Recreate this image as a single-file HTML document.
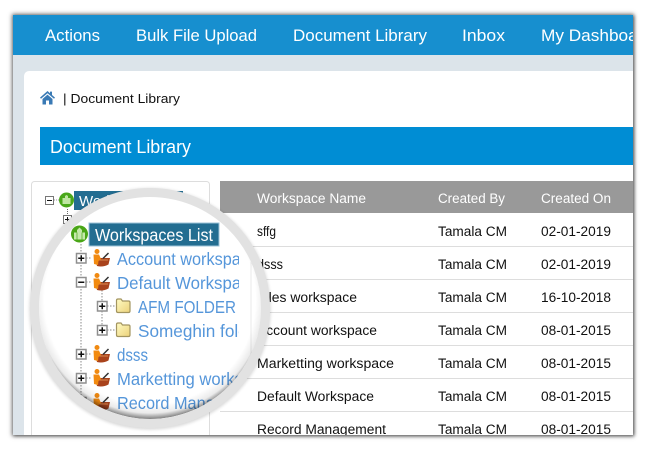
<!DOCTYPE html>
<html><head><meta charset="utf-8"><style>
html,body{margin:0;padding:0;background:#fff;width:650px;height:450px;overflow:hidden}
#w{position:absolute;left:13px;top:15px;width:620px;height:420px;box-shadow:0 0 4px 1px rgba(40,40,40,.65),1px 1px 3px rgba(40,40,40,.45);background:#dce4ea}
svg{position:absolute;left:0;top:0}
text{font-family:"Liberation Sans",sans-serif}
</style></head><body>
<div id="w"></div>
<svg width="650" height="450" viewBox="0 0 650 450">
<defs>
<clipPath id="win"><rect x="13" y="15" width="620" height="420"/></clipPath>
<clipPath id="lens"><rect x="60" y="190" width="179" height="240"/></clipPath>
<clipPath id="lensC"><circle cx="150" cy="308" r="111"/></clipPath>
<radialGradient id="inner" cx="150" cy="299" r="120" gradientUnits="userSpaceOnUse">
<stop offset="0.88" stop-color="#000" stop-opacity="0"/><stop offset="0.95" stop-color="#000" stop-opacity=".08"/><stop offset="1" stop-color="#000" stop-opacity=".5"/>
</radialGradient>
<filter id="ds" x="-10%" y="-10%" width="120%" height="120%"><feGaussianBlur stdDeviation="1.5"/></filter>
<filter id="soft" x="-5%" y="-5%" width="110%" height="110%"><feGaussianBlur stdDeviation="0.3"/></filter>
<linearGradient id="fold" x1="0" y1="0" x2="1" y2="1"><stop offset="0" stop-color="#fffbc4"/><stop offset="1" stop-color="#ecd27a"/></linearGradient>
<g id="mp"><rect x="-4.5" y="-4.5" width="9.5" height="9.5" fill="#fff" stroke="#8f8f8f" stroke-width="1.5"/><path d="M-2.8 .25H3.3M.25-2.8V3.3" stroke="#111" stroke-width="1.5"/></g>
<g id="mm"><rect x="-4.5" y="-4.5" width="9.5" height="9.5" fill="#fff" stroke="#8f8f8f" stroke-width="1.5"/><path d="M-2.8 .25H3.3" stroke="#111" stroke-width="1.5"/></g>
<g id="ws"><path d="M-5 0H10L8.5 6.5Q3 9.5-3 8Z" fill="#a9431c"/><path d="M-3 2H8" stroke="#d9894f"/><circle cx="-3" cy="-6.5" r="2.5" fill="#f08a12"/><path d="M-6.5-3.5H-1L1 1-1.5 3-2 7-6 6Z" fill="#f28a10"/><path d="M3 .5L8.5-5" stroke="#333" stroke-width="1.5"/></g>
<g id="fo"><path d="M-6.5-5.5Q-6.500-7-5-7H-2L-.5-5H5.5Q7-5 7-3.5V5Q7 6.500 5.500 6.500H-5Q-6.500 6.500-6.500 5Z" fill="url(#fold)" stroke="#a39560" stroke-width="1.2"/></g>
<g id="gr"><circle r="8.5" fill="#49a616"/><path d="M-5.500 5.500V-1.500H-2.500V-4L0-6.500 2.500-4V-1.500H5.500V5.500Z" fill="#c6e9ab"/><path d="M-2.500-1.500V5.500M2.500-1.500V5.500" stroke="#6dbb44"/></g>
</defs>
<g clip-path="url(#win)">
<rect x="13" y="15" width="620" height="40" fill="#178fcf"/>
<g fill="#fff" font-size="17">
<text x="45" y="41" textLength="55" lengthAdjust="spacingAndGlyphs">Actions</text>
<text x="136" y="41" textLength="121" lengthAdjust="spacingAndGlyphs">Bulk File Upload</text>
<text x="293" y="41" textLength="134" lengthAdjust="spacingAndGlyphs">Document Library</text>
<text x="462" y="41" textLength="43" lengthAdjust="spacingAndGlyphs">Inbox</text>
<text x="541" y="41" textLength="112" lengthAdjust="spacingAndGlyphs">My Dashboard</text>
</g>
<rect x="24" y="71" width="640" height="400" rx="5" fill="#fff"/>
<path d="M47.500 91L40 97.600 41 98.800 47.500 93.200 54 98.800 55 97.600 52 95V91.600H50V93.200ZM42.500 99V104.500H46V100.500H49V104.500H52.500V99L47.500 94.600Z" fill="#3a7ab5"/>
<text x="63" y="103" font-size="13" fill="#111" textLength="117" lengthAdjust="spacingAndGlyphs">| Document Library</text>
<rect x="40" y="127" width="600" height="38" fill="#008dd4"/>
<text x="50" y="153" font-size="18" fill="#fff" textLength="141" lengthAdjust="spacingAndGlyphs">Document Library</text>
<rect x="31.500" y="181.500" width="178" height="270" rx="3" fill="#fff" stroke="#ddd"/>
<rect x="220" y="181" width="420" height="32" fill="#999"/>
<g fill="#fff" font-size="13.500">
<text x="257" y="203" textLength="109" lengthAdjust="spacingAndGlyphs">Workspace Name</text>
<text x="438" y="203" textLength="67" lengthAdjust="spacingAndGlyphs">Created By</text>
<text x="541" y="203" textLength="70" lengthAdjust="spacingAndGlyphs">Created On</text>
</g>
<g stroke="#ddd"><path d="M220 246.500H640M220 279.500H640M220 312.500H640M220 345.500H640M220 378.500H640M220 411.500H640"/></g>
<g fill="#111" font-size="13.500">
<text x="257" y="236" textLength="19" lengthAdjust="spacingAndGlyphs">sffg</text>
<text x="257" y="269" textLength="26" lengthAdjust="spacingAndGlyphs">dsss</text>
<text x="257" y="302" textLength="100" lengthAdjust="spacingAndGlyphs">Files workspace</text>
<text x="257" y="335" textLength="120" lengthAdjust="spacingAndGlyphs">Account workspace</text>
<text x="257" y="368" textLength="137" lengthAdjust="spacingAndGlyphs">Marketting workspace</text>
<text x="257" y="401" textLength="117" lengthAdjust="spacingAndGlyphs">Default Workspace</text>
<text x="257" y="434" textLength="129" lengthAdjust="spacingAndGlyphs">Record Management</text>
<text x="438" y="236" textLength="69" lengthAdjust="spacingAndGlyphs">Tamala CM</text>
<text x="438" y="269" textLength="69" lengthAdjust="spacingAndGlyphs">Tamala CM</text>
<text x="438" y="302" textLength="69" lengthAdjust="spacingAndGlyphs">Tamala CM</text>
<text x="438" y="335" textLength="69" lengthAdjust="spacingAndGlyphs">Tamala CM</text>
<text x="438" y="368" textLength="69" lengthAdjust="spacingAndGlyphs">Tamala CM</text>
<text x="438" y="401" textLength="69" lengthAdjust="spacingAndGlyphs">Tamala CM</text>
<text x="438" y="434" textLength="69" lengthAdjust="spacingAndGlyphs">Tamala CM</text>
<text x="541" y="236" textLength="70" lengthAdjust="spacingAndGlyphs">02-01-2019</text>
<text x="541" y="269" textLength="70" lengthAdjust="spacingAndGlyphs">02-01-2019</text>
<text x="541" y="302" textLength="70" lengthAdjust="spacingAndGlyphs">16-10-2018</text>
<text x="541" y="335" textLength="70" lengthAdjust="spacingAndGlyphs">08-01-2015</text>
<text x="541" y="368" textLength="70" lengthAdjust="spacingAndGlyphs">08-01-2015</text>
<text x="541" y="401" textLength="70" lengthAdjust="spacingAndGlyphs">08-01-2015</text>
<text x="541" y="434" textLength="70" lengthAdjust="spacingAndGlyphs">08-01-2015</text>
</g>
<!-- small tree behind lens -->
<rect x="45.500" y="196.500" width="8" height="8" fill="#fff" stroke="#777"/><path d="M47 200.500H52" stroke="#111"/>
<path d="M54 200H59" stroke="#999" stroke-dasharray="1 1"/>
<circle cx="66.500" cy="200" r="7.500" fill="#4aa81a"/><path d="M62.500 204V198H65V196L66.500 195 68 196V198H70.500V204Z" fill="#bfe6a2"/>
<rect x="74" y="191" width="109" height="19" fill="#236d91"/>
<text x="79" y="206" font-size="15" fill="#fff">Workspaces List</text>
<path d="M67.500 209V214" stroke="#666" stroke-dasharray="1 1"/>
<rect x="63.500" y="215.500" width="8" height="8" fill="#fff" stroke="#777"/><path d="M65 219.500H70M67.500 217V222" stroke="#111"/>
<!-- lens -->
<circle cx="150" cy="309" r="120.500" fill="#000" opacity=".16" filter="url(#ds)"/>
<circle cx="150" cy="308" r="115.500" fill="#fff" stroke="#e2e2e2" stroke-width="9"/>
<g clip-path="url(#lensC)">
<path d="M251 225V420" stroke="#e8e8e8"/>
<g stroke="#888" stroke-dasharray="1.500 1.500" fill="none">
<path d="M81 244V402M102 290V330"/>
<path d="M86 258H92M86 282H92M86 354H92M86 378H92M86 402H92M107 306H115M107 330H115"/>
</g>
<rect x="89" y="223" width="130" height="23" fill="#236d91" stroke="#9cc3d8"/>
<text x="95" y="241" font-size="17.500" fill="#fff" textLength="118" lengthAdjust="spacingAndGlyphs">Workspaces List</text>
<use href="#gr" x="79.500" y="234"/>
<use href="#mp" x="81" y="258"/><use href="#mm" x="81" y="282"/>
<use href="#mp" x="102" y="306"/><use href="#mp" x="102" y="330"/>
<use href="#mp" x="81" y="354"/><use href="#mp" x="81" y="378"/><use href="#mp" x="81" y="402"/>
<use href="#ws" x="100" y="258"/><use href="#ws" x="100" y="282"/>
<use href="#fo" x="123" y="306"/><use href="#fo" x="123" y="330"/>
<use href="#ws" x="100" y="354"/><use href="#ws" x="100" y="378"/><use href="#ws" x="100" y="402"/>
<g clip-path="url(#lens)" fill="#5596da" font-size="17.500">
<text x="117" y="265" textLength="141" lengthAdjust="spacingAndGlyphs">Account workspace</text>
<text x="117" y="289" textLength="142" lengthAdjust="spacingAndGlyphs">Default Workspace</text>
<text x="138" y="313" textLength="98" lengthAdjust="spacingAndGlyphs">AFM FOLDER</text>
<text x="138" y="337" textLength="125" lengthAdjust="spacingAndGlyphs">Someghin folder</text>
<text x="117" y="361" textLength="31" lengthAdjust="spacingAndGlyphs">dsss</text>
<text x="117" y="385" textLength="162" lengthAdjust="spacingAndGlyphs">Marketting workspace</text>
<text x="117" y="409" textLength="152" lengthAdjust="spacingAndGlyphs">Record Management</text>
</g>
<circle cx="150" cy="308" r="111" fill="url(#inner)"/>
</g>
</g>
</svg>
</body></html>
